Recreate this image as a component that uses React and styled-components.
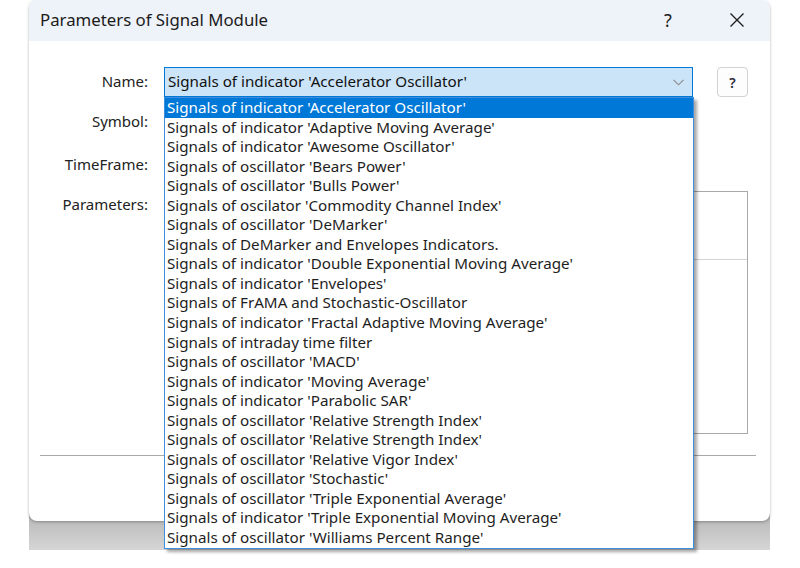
import React from 'react';
import styled, { createGlobalStyle } from 'styled-components';

const Global = createGlobalStyle`
  html, body {
    margin: 0;
    background: #fff;
    overflow: hidden;
  }
  body {
    font-family: "Noto Sans", "Open Sans", sans-serif;
    color: #1e1e1e;
  }
`;

const signals = [
  "Signals of indicator 'Accelerator Oscillator'",
  "Signals of indicator 'Adaptive Moving Average'",
  "Signals of indicator 'Awesome Oscillator'",
  "Signals of oscillator 'Bears Power'",
  "Signals of oscillator 'Bulls Power'",
  "Signals of oscilator 'Commodity Channel Index'",
  "Signals of oscillator 'DeMarker'",
  'Signals of DeMarker and Envelopes Indicators.',
  "Signals of indicator 'Double Exponential Moving Average'",
  "Signals of indicator 'Envelopes'",
  'Signals of FrAMA and Stochastic-Oscillator',
  "Signals of indicator 'Fractal Adaptive Moving Average'",
  'Signals of intraday time filter',
  "Signals of oscillator 'MACD'",
  "Signals of indicator 'Moving Average'",
  "Signals of indicator 'Parabolic SAR'",
  "Signals of oscillator 'Relative Strength Index'",
  "Signals of oscillator 'Relative Strength Index'",
  "Signals of oscillator 'Relative Vigor Index'",
  "Signals of oscillator 'Stochastic'",
  "Signals of oscillator 'Triple Exponential Average'",
  "Signals of indicator 'Triple Exponential Moving Average'",
  "Signals of oscillator 'Williams Percent Range'",
];

const Page = styled.div`
  width: 800px;
  height: 568px;
  padding-left: 29px;
  box-sizing: border-box;
`;

const Stage = styled.div`
  width: 741px;
`;

const Window = styled.div`
  position: relative;
  z-index: 1;
  background: #fff;
  border-radius: 8px;
  box-shadow: 0 1px 3px rgba(0, 0, 0, 0.3);
`;

const TitleBar = styled.div`
  height: 41px;
  display: flex;
  align-items: center;
  padding-left: 11px;
  background: #eef2f9;
  border-radius: 8px 8px 0 0;
`;

const Title = styled.div`
  flex: 1;
  font-size: 16.8px;
  color: #1b1b1b;
  margin-top: -2px;
`;

const TitleButtons = styled.div`
  display: flex;
  align-items: center;
  gap: 23px;
  height: 100%;
  padding-right: 10px;
`;

const TitleButton = styled.div`
  width: 46px;
  height: 100%;
  display: flex;
  align-items: center;
  justify-content: center;
  font-size: 18px;
  color: #1b1b1b;
  margin-top: -2px;
`;

const Body = styled.div`
  height: 480px;
  display: flex;
  flex-direction: column;
`;

const Form = styled.div`
  display: grid;
  grid-template-columns: 108px 1fr;
  grid-template-rows: 30px 50px 36px 251px;
  column-gap: 16px;
  padding: 26px 22px 0 11px;
`;

const Label = styled.div`
  justify-self: end;
  align-self: ${(p) => (p.$top ? 'start' : 'center')};
  padding-top: ${(p) => (p.$top ? 13 : 0)}px;
  font-size: 15px;
  color: #222;
  margin-top: -2px;
`;

const NameRow = styled.div`
  display: flex;
  gap: 24px;
`;

const ComboWrap = styled.div`
  position: relative;
  flex: 1;
`;

const Combo = styled.div`
  height: 30px;
  box-sizing: border-box;
  display: flex;
  align-items: center;
  padding: 0 8px 0 3px;
  background: #cce4f7;
  border: 1px solid #0078d7;
  font-size: 15.2px;
  color: #111;
  span {
    flex: 1;
    margin-top: -2px;
  }
`;

const DropList = styled.ul`
  position: absolute;
  top: 100%;
  left: 0;
  width: 530px;
  margin: 0;
  padding: 0;
  list-style: none;
  box-sizing: border-box;
  background: #fff;
  border: 1px solid #3e8ede;
  box-shadow: 3px 3px 3px rgba(0, 0, 0, 0.35);
`;

const Option = styled.li`
  height: 19.55px;
  line-height: 19.55px;
  padding-left: 2px;
  font-size: 15.2px;
  white-space: nowrap;
  background: ${(p) => (p.$active ? '#0078d7' : 'transparent')};
  color: ${(p) => (p.$active ? '#fff' : '#1e1e1e')};
`;

const HelpButton = styled.div`
  width: 31px;
  height: 30px;
  box-sizing: border-box;
  border: 1px solid #d2d2d2;
  border-radius: 4px;
  background: #fdfdfd;
  display: flex;
  align-items: center;
  justify-content: center;
  font-size: 14px;
  font-weight: 600;
  color: #2a2a3a;
`;

const Field = styled.div`
  align-self: center;
  height: 24px;
  border: 1px solid #b4b4b4;
  box-sizing: border-box;
  width: 200px;
`;

const ParamBox = styled.div`
  margin-top: 8px;
  height: 243px;
  box-sizing: border-box;
  border: 1px solid #a8a8a8;
  display: flex;
  flex-direction: column;
`;

const ParamHeader = styled.div`
  height: 67px;
  border-bottom: 1px solid #d4d4d4;
`;

const Separator = styled.hr`
  margin: 21px 14px 0 11px;
  border: none;
  border-top: 1px solid #a8a8a8;
`;

const Backdrop = styled.div`
  height: 37px;
  margin-top: -8px;
  background: linear-gradient(#b6b6b6, #d6d6d6);
`;

function CloseIcon() {
  return (
    <svg width="16" height="16" viewBox="0 0 16 16">
      <path d="M1.5 1.5 L14.5 14.5 M14.5 1.5 L1.5 14.5" stroke="#1b1b1b" strokeWidth="1.3" fill="none" />
    </svg>
  );
}

function Chevron() {
  return (
    <svg width="11" height="7" viewBox="0 0 11 7">
      <path d="M0.5 0.8 L5.5 5.8 L10.5 0.8" stroke="#8a8a8a" strokeWidth="1.1" fill="none" />
    </svg>
  );
}

export default function App() {
  return (
    <Page>
      <Global />
      <Stage>
        <Window>
          <TitleBar>
            <Title>Parameters of Signal Module</Title>
            <TitleButtons>
              <TitleButton>?</TitleButton>
              <TitleButton>
                <CloseIcon />
              </TitleButton>
            </TitleButtons>
          </TitleBar>
          <Body>
            <Form>
              <Label>Name:</Label>
              <NameRow>
                <ComboWrap>
                  <Combo>
                    <span>{signals[0]}</span>
                    <Chevron />
                  </Combo>
                  <DropList>
                    {signals.map((s, i) => (
                      <Option key={i} $active={i === 0}>
                        {s}
                      </Option>
                    ))}
                  </DropList>
                </ComboWrap>
                <HelpButton>?</HelpButton>
              </NameRow>
              <Label>Symbol:</Label>
              <Field />
              <Label>TimeFrame:</Label>
              <Field />
              <Label $top>Parameters:</Label>
              <ParamBox>
                <ParamHeader />
              </ParamBox>
            </Form>
            <Separator />
          </Body>
        </Window>
        <Backdrop />
      </Stage>
    </Page>
  );
}
